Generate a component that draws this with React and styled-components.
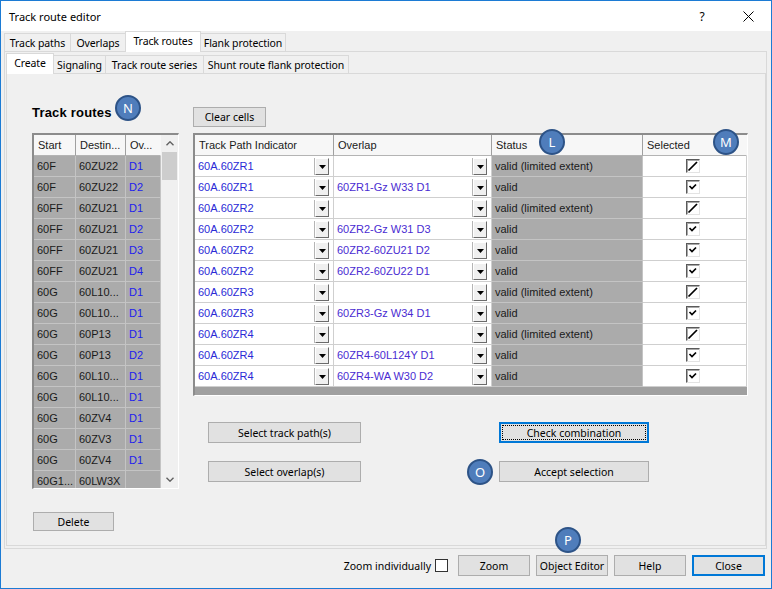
import React from "react";
import styled, { createGlobalStyle, css } from "styled-components";

const UI_FONT = `"Noto Sans", "Open Sans", sans-serif`;
const GRID_FONT = `"Liberation Sans", Arial, sans-serif`;

const GlobalStyle = createGlobalStyle`
  html, body {
    margin: 0;
    padding: 0;
    background: #ffffff;
  }
  * {
    box-sizing: border-box;
  }
`;

const Window = styled.div`
  width: 772px;
  height: 589px;
  border: 1px solid #1c7bd4;
  background: #f0f0f0;
  display: flex;
  flex-direction: column;
  font-family: ${UI_FONT};
  font-size: 10.5px;
  color: #000;
  overflow: hidden;
`;

const TitleBar = styled.div`
  height: 30px;
  flex-shrink: 0;
  background: #ffffff;
  display: flex;
  align-items: center;
  padding-left: 8px;
`;

const Title = styled.div`
  flex: 1;
  font-size: 11px;
`;

const TitleButton = styled.div`
  width: 46px;
  height: 30px;
  display: flex;
  align-items: center;
  justify-content: center;
  font-size: 12px;
`;

const Body = styled.div`
  flex: 1;
  display: flex;
  flex-direction: column;
  padding: 0 4px 0 3px;
  min-height: 0;
`;

const TabStrip = styled.div`
  height: 20px;
  flex-shrink: 0;
  display: flex;
  align-items: flex-end;
`;

const Tab = styled.div`
  width: ${(p) => p.$w}px;
  height: ${(p) => (p.$active ? 21 : 18)}px;
  margin-bottom: ${(p) => (p.$active ? -1 : 0)}px;
  margin-left: ${(p) => (p.$first ? 0 : -1)}px;
  position: relative;
  z-index: ${(p) => (p.$active ? 2 : 1)};
  background: ${(p) => (p.$active ? "#ffffff" : "#f0f0f0")};
  border: 1px solid #d9d9d9;
  border-bottom: none;
  display: flex;
  align-items: center;
  justify-content: center;
  padding-bottom: ${(p) => (p.$active ? 2 : 0)}px;
  white-space: nowrap;
  letter-spacing: -0.1px;
`;

const OuterPanel = styled.div`
  flex: 1;
  min-height: 0;
  border: 1px solid #d9d9d9;
  padding: 1px 0 2px 1px;
  display: flex;
  flex-direction: column;
`;

const InnerPanel = styled.div`
  flex: 1;
  min-height: 0;
  border: 1px solid #d9d9d9;
  padding-left: 25px;
  display: flex;
  gap: 14px;
`;

const LeftColumn = styled.div`
  width: 147px;
  display: flex;
  flex-direction: column;
`;

const Heading = styled.div`
  position: relative;
  margin-top: 31px;
  margin-bottom: 12px;
  height: 16px;
  line-height: 16px;
  font-family: ${GRID_FONT};
  font-weight: bold;
  font-size: 13px;
  letter-spacing: 0.2px;
`;

const Badge = styled.div`
  position: absolute;
  left: ${(p) => p.$x}px;
  top: ${(p) => p.$y}px;
  width: 26px;
  height: 26px;
  border-radius: 50%;
  background: #4f7dbb;
  border: 2px solid #2d5387;
  color: #ffffff;
  font-family: ${UI_FONT};
  font-weight: normal;
  font-size: 13px;
  letter-spacing: 0;
  display: flex;
  align-items: center;
  justify-content: center;
  z-index: 5;
`;

const ListBox = styled.div`
  width: 147px;
  height: 356px;
  border-style: solid;
  border-width: 2px 1px 1px 2px;
  border-color: #8c8c8c #ffffff #ffffff #8c8c8c;
  display: flex;
  background: #f0f0f0;
`;

const ListTable = styled.div`
  width: 127px;
  overflow: hidden;
  display: flex;
  flex-direction: column;
`;

const Row = styled.div`
  display: flex;
  flex-shrink: 0;
`;

const HeadCell = styled.div`
  width: ${(p) => p.$w}px;
  height: 21px;
  flex-shrink: 0;
  background: #f7f7f7;
  border-right: 1px solid ${(p) => (p.$last ? "transparent" : "#a0a0a0")};
  border-bottom: 1px solid #b4b4b4;
  display: flex;
  align-items: center;
  padding-left: 4px;
  font-family: ${GRID_FONT};
  font-size: 11px;
  color: #1a1a1a;
  white-space: nowrap;
  overflow: hidden;
`;

const Cell = styled.div`
  width: ${(p) => p.$w}px;
  height: 21px;
  flex-shrink: 0;
  background: ${(p) => (p.$gray ? "#ababab" : "#ffffff")};
  border-right: 1px solid ${(p) => (p.$gray ? "#c4c4c4" : "#cfcfcf")};
  border-bottom: 1px solid ${(p) => (p.$gray ? "#c4c4c4" : "#cfcfcf")};
  display: flex;
  align-items: center;
  justify-content: ${(p) => (p.$center ? "center" : "flex-start")};
  padding-left: ${(p) => (p.$center ? 0 : 3)}px;
  font-family: ${GRID_FONT};
  font-size: 11px;
  color: ${(p) => p.$color || "#1a1a1a"};
  white-space: nowrap;
  overflow: hidden;
`;

const ScrollBar = styled.div`
  width: 17px;
  display: flex;
  flex-direction: column;
  align-items: center;
  background: #f0f0f0;
`;

const ScrollArrow = styled.div`
  height: 17px;
  width: 17px;
  display: flex;
  align-items: center;
  justify-content: center;
`;

const ScrollThumb = styled.div`
  width: 15px;
  height: 28px;
  background: #cdcdcd;
`;

const ScrollTrack = styled.div`
  flex: 1;
`;

const Button = styled.button`
  width: ${(p) => p.$w}px;
  height: ${(p) => p.$h || 21}px;
  padding: 0;
  background: #e1e1e1;
  border: 1px solid #adadad;
  font-family: ${UI_FONT};
  font-size: 10.5px;
  color: #000;
  flex-shrink: 0;
  white-space: nowrap;
  ${(p) =>
    p.$default &&
    css`
      border: 2px solid #0078d7;
    `}
  ${(p) =>
    p.$focus &&
    css`
      outline: 1px dotted #000;
      outline-offset: -4px;
    `}
`;

const DeleteButton = styled(Button)`
  margin-top: 23px;
  margin-left: 1px;
`;

const RightColumn = styled.div`
  width: 555px;
  display: flex;
  flex-direction: column;
`;

const ClearButton = styled(Button)`
  margin-top: 33px;
  margin-bottom: 6px;
`;

const Grid = styled.div`
  position: relative;
  width: 555px;
  height: 263px;
  border-style: solid;
  border-width: 2px 1px 1px 2px;
  border-color: #8c8c8c #ffffff #ffffff #8c8c8c;
  background: #a0a0a0;
  display: flex;
  flex-direction: column;
`;

const DropButton = styled.div`
  margin-left: auto;
  margin-right: 4px;
  width: 14px;
  height: 17px;
  flex-shrink: 0;
  background: #f0f0f0;
  border: 1px solid;
  border-color: #ffffff #6b6b6b #6b6b6b #ffffff;
  box-shadow: -1px 0 0 #b5b5b5;
  display: flex;
  align-items: center;
  justify-content: center;
  padding-top: 1px;
`;

const CheckBox = styled.div`
  width: 14px;
  height: 14px;
  margin-left: -4px;
  background: #ffffff;
  border: 1px solid;
  border-color: #5a5a5a #e3e3e3 #e3e3e3 #5a5a5a;
  box-shadow: inset 1px 1px 0 #a8a8a8;
  display: flex;
  align-items: center;
  justify-content: center;
`;

const ActionArea = styled.div`
  margin-top: 26px;
  padding-left: 15px;
  display: grid;
  grid-template-columns: 153px 150px;
  column-gap: 138px;
  row-gap: 18px;
`;

const Slot = styled.div`
  position: relative;
`;

const BottomBar = styled.div`
  height: 39px;
  flex-shrink: 0;
  display: flex;
  justify-content: flex-end;
  align-items: flex-start;
  padding-top: 6px;
  padding-right: 2px;
  gap: 6px;
`;

const ZoomLabel = styled.label`
  height: 21px;
  display: flex;
  align-items: center;
  gap: 4px;
  margin-right: 4px;
`;

const PlainBox = styled.span`
  width: 13px;
  height: 13px;
  background: #ffffff;
  border: 1px solid #333333;
`;

const listRows = [
  ["60F", "60ZU22", "D1"],
  ["60F", "60ZU22", "D2"],
  ["60FF", "60ZU21", "D1"],
  ["60FF", "60ZU21", "D2"],
  ["60FF", "60ZU21", "D3"],
  ["60FF", "60ZU21", "D4"],
  ["60G", "60L10...", "D1"],
  ["60G", "60L10...", "D1"],
  ["60G", "60P13", "D1"],
  ["60G", "60P13", "D2"],
  ["60G", "60L10...", "D1"],
  ["60G", "60L10...", "D1"],
  ["60G", "60ZV4", "D1"],
  ["60G", "60ZV3", "D1"],
  ["60G", "60ZV4", "D1"],
  ["60G1...", "60LW3X", ""],
];

const LIMITED = "valid (limited extent)";

const routeRows = [
  { tpi: "60A.60ZR1", overlap: "", status: LIMITED },
  { tpi: "60A.60ZR1", overlap: "60ZR1-Gz W33 D1", status: "valid" },
  { tpi: "60A.60ZR2", overlap: "", status: LIMITED },
  { tpi: "60A.60ZR2", overlap: "60ZR2-Gz W31 D3", status: "valid" },
  { tpi: "60A.60ZR2", overlap: "60ZR2-60ZU21 D2", status: "valid" },
  { tpi: "60A.60ZR2", overlap: "60ZR2-60ZU22 D1", status: "valid" },
  { tpi: "60A.60ZR3", overlap: "", status: LIMITED },
  { tpi: "60A.60ZR3", overlap: "60ZR3-Gz W34 D1", status: "valid" },
  { tpi: "60A.60ZR4", overlap: "", status: LIMITED },
  { tpi: "60A.60ZR4", overlap: "60ZR4-60L124Y D1", status: "valid" },
  { tpi: "60A.60ZR4", overlap: "60ZR4-WA W30 D2", status: "valid" },
];

const outerTabs = [
  { label: "Track paths", w: 67 },
  { label: "Overlaps", w: 56 },
  { label: "Track routes", w: 76, active: true },
  { label: "Flank protection", w: 86 },
];

const innerTabs = [
  { label: "Create", w: 48, active: true },
  { label: "Signaling", w: 53 },
  { label: "Track route series", w: 99 },
  { label: "Shunt route flank protection", w: 146 },
];

function Chevron({ down }) {
  return (
    <svg width="8" height="5" viewBox="0 0 8 5">
      <path
        d={down ? "M0.5 0.8L4 4.2L7.5 0.8" : "M0.5 4.2L4 0.8L7.5 4.2"}
        stroke="#606060"
        strokeWidth="1.4"
        fill="none"
      />
    </svg>
  );
}

function DropArrow() {
  return (
    <DropButton>
      <svg width="7" height="4" viewBox="0 0 7 4">
        <path d="M0 0H7L3.5 4Z" fill="#000" />
      </svg>
    </DropButton>
  );
}

function SelectBox({ limited }) {
  return (
    <CheckBox>
      <svg width="12" height="12" viewBox="0 0 12 12">
        {limited ? (
          <path d="M1.5 10.5L10 2" stroke="#000" strokeWidth="1.7" />
        ) : (
          <path d="M2.5 5L5 7.5L9 3.5" stroke="#000" strokeWidth="1.7" fill="none" />
        )}
      </svg>
    </CheckBox>
  );
}

function Tabs({ tabs }) {
  return (
    <TabStrip>
      {tabs.map((t, i) => (
        <Tab key={t.label} $w={t.w} $active={t.active} $first={i === 0}>
          {t.label}
        </Tab>
      ))}
    </TabStrip>
  );
}

export default function App() {
  return (
    <>
      <GlobalStyle />
      <Window>
        <TitleBar>
          <Title>Track route editor</Title>
          <TitleButton>?</TitleButton>
          <TitleButton>
            <svg width="11" height="11" viewBox="0 0 11 11">
              <path d="M0.5 0.5L10.5 10.5M10.5 0.5L0.5 10.5" stroke="#000" strokeWidth="1" />
            </svg>
          </TitleButton>
        </TitleBar>
        <Body>
          <Tabs tabs={outerTabs} />
          <OuterPanel>
            <Tabs tabs={innerTabs} />
            <InnerPanel>
              <LeftColumn>
                <Heading>
                  Track routes
                  <Badge $x={83} $y={-10}>N</Badge>
                </Heading>
                <ListBox>
                  <ListTable>
                    <Row>
                      <HeadCell $w={42}>Start</HeadCell>
                      <HeadCell $w={50}>Destin...</HeadCell>
                      <HeadCell $w={35} $last>Ov...</HeadCell>
                    </Row>
                    {listRows.map((r, i) => (
                      <Row key={i}>
                        <Cell $gray $w={42}>{r[0]}</Cell>
                        <Cell $gray $w={50}>{r[1]}</Cell>
                        <Cell $gray $w={35} $color="#2020ee">{r[2]}</Cell>
                      </Row>
                    ))}
                  </ListTable>
                  <ScrollBar>
                    <ScrollArrow>
                      <Chevron />
                    </ScrollArrow>
                    <ScrollThumb />
                    <ScrollTrack />
                    <ScrollArrow>
                      <Chevron down />
                    </ScrollArrow>
                  </ScrollBar>
                </ListBox>
                <DeleteButton $w={81} $h={19}>Delete</DeleteButton>
              </LeftColumn>

              <RightColumn>
                <ClearButton $w={73} $h={20}>Clear cells</ClearButton>
                <Grid>
                  <Badge $x={344} $y={-6}>L</Badge>
                  <Badge $x={518} $y={-6}>M</Badge>
                  <Row>
                    <HeadCell $w={139}>Track Path Indicator</HeadCell>
                    <HeadCell $w={158}>Overlap</HeadCell>
                    <HeadCell $w={151}>Status</HeadCell>
                    <HeadCell $w={104} $last>Selected</HeadCell>
                  </Row>
                  {routeRows.map((r, i) => (
                    <Row key={i}>
                      <Cell $w={139} $color="#2b2bd6">
                        {r.tpi}
                        <DropArrow />
                      </Cell>
                      <Cell $w={158} $color="#4a2cd2">
                        {r.overlap}
                        <DropArrow />
                      </Cell>
                      <Cell $gray $w={151}>{r.status}</Cell>
                      <Cell $w={104} $center>
                        <SelectBox limited={r.status === LIMITED} />
                      </Cell>
                    </Row>
                  ))}
                </Grid>
                <ActionArea>
                  <Button $w={153}>Select track path(s)</Button>
                  <Button $w={150} $default $focus>Check combination</Button>
                  <Button $w={153}>Select overlap(s)</Button>
                  <Slot>
                    <Badge $x={-32} $y={-2}>O</Badge>
                    <Button $w={150}>Accept selection</Button>
                  </Slot>
                </ActionArea>
              </RightColumn>
            </InnerPanel>
          </OuterPanel>
          <BottomBar>
            <ZoomLabel>
              Zoom individually
              <PlainBox />
            </ZoomLabel>
            <Button $w={72}>Zoom</Button>
            <Slot>
              <Badge $x={19} $y={-28}>P</Badge>
              <Button $w={72}>Object Editor</Button>
            </Slot>
            <Button $w={72}>Help</Button>
            <Button $w={73} $default>Close</Button>
          </BottomBar>
        </Body>
      </Window>
    </>
  );
}
